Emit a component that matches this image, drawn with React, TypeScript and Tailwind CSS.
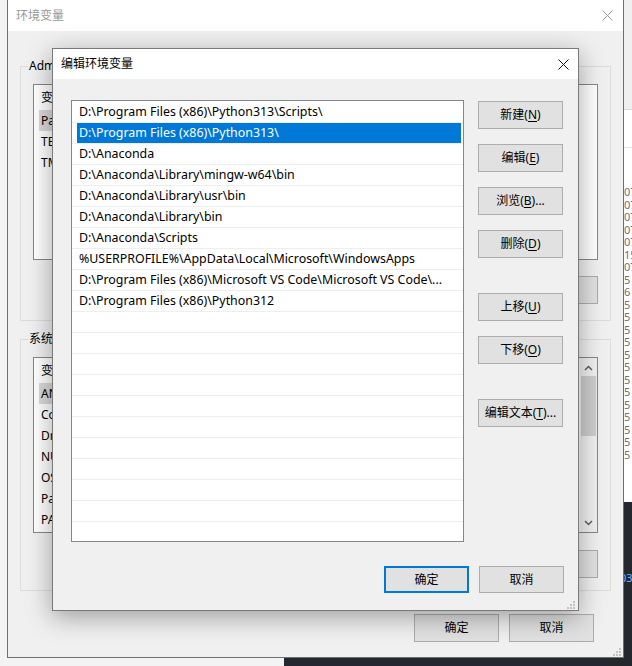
import type { ReactNode } from "react";

const paths = [
  "D:\\Program Files (x86)\\Python313\\Scripts\\",
  "D:\\Program Files (x86)\\Python313\\",
  "D:\\Anaconda",
  "D:\\Anaconda\\Library\\mingw-w64\\bin",
  "D:\\Anaconda\\Library\\usr\\bin",
  "D:\\Anaconda\\Library\\bin",
  "D:\\Anaconda\\Scripts",
  "%USERPROFILE%\\AppData\\Local\\Microsoft\\WindowsApps",
  "D:\\Program Files (x86)\\Microsoft VS Code\\Microsoft VS Code\\...",
  "D:\\Program Files (x86)\\Python312",
];

const userVars = [
  ["Path", "D:\\Program Files (x86)\\Python313\\Scripts\\;D:\\Program Files..."],
  ["TEMP", "%USERPROFILE%\\AppData\\Local\\Temp"],
  ["TMP", "%USERPROFILE%\\AppData\\Local\\Temp"],
];

const systemVars = [
  ["ANDROID_HOME", "D:\\Android\\Sdk"],
  ["ComSpec", "C:\\Windows\\system32\\cmd.exe"],
  ["DriverData", "C:\\Windows\\System32\\Drivers\\DriverData"],
  ["NUMBER_OF_PROCESSORS", "8"],
  ["OS", "Windows_NT"],
  ["Path", "C:\\Windows\\system32;C:\\Windows;C:\\Windows\\System32\\Wbem;..."],
  ["PATHEXT", ".COM;.EXE;.BAT;.CMD;.VBS;.VBE;.JS;.JSE;.WSF;.WSH;.MSC"],
];

const logNumbers = ["07", "07", "07", "07", "07", "15", "07", "5", "6", "5", "5", "5", "5", "5", "5", "5", "5", "5", "5", "5", "5", "5"];

function Button({ children, className = "" }: { children: ReactNode; className?: string }) {
  return (
    <div
      className={`flex w-[85px] shrink-0 items-center justify-center bg-[#e1e1e1] text-[12px] leading-none text-black ${className}`}
    >
      {children}
    </div>
  );
}

function CloseX({ color }: { color: string }) {
  return (
    <svg width="11" height="11" viewBox="0 0 11 11" fill="none" stroke={color} strokeWidth="1">
      <path d="M0.5 0.5L10.5 10.5M10.5 0.5L0.5 10.5" />
    </svg>
  );
}

function Grip() {
  return (
    <svg width="8" height="8" viewBox="0 0 8 8" fill="#c2c2c2">
      <rect x="6" y="0" width="2" height="2" />
      <rect x="3" y="3" width="2" height="2" />
      <rect x="6" y="3" width="2" height="2" />
      <rect x="0" y="6" width="2" height="2" />
      <rect x="3" y="6" width="2" height="2" />
      <rect x="6" y="6" width="2" height="2" />
    </svg>
  );
}

function VarList({ rows, scroll }: { rows: string[][]; scroll?: boolean }) {
  return (
    <div className="mx-[12px] mt-[17px] flex h-[176px] overflow-hidden border border-[#828790] bg-white">
      <div className="min-w-0 flex-1">
        <div className="flex h-[25px] items-center pl-[7px] text-[12px]">
          <div className="w-[140px]">变量</div>
          <div>值</div>
        </div>
        {rows.map(([k, v], i) => (
          <div key={k} className="ml-[5px] flex h-[21px] items-center text-[12px] whitespace-nowrap">
            <div className={`flex h-full w-[142px] shrink-0 items-center pl-[2px] ${i === 0 ? "bg-[#d9d9d9]" : ""}`}>
              {k}
            </div>
            <div className="truncate pl-[4px]">{v}</div>
          </div>
        ))}
      </div>
      {scroll && (
        <div className="flex w-[17px] flex-col items-center bg-[#f0f0f0]">
          <svg className="mt-[7px]" width="9" height="6" viewBox="0 0 9 6" fill="none" stroke="#606060" strokeWidth="1.5">
            <path d="M1 5L4.5 1.5L8 5" />
          </svg>
          <div className="mt-[5px] h-[60px] w-[15px] bg-[#cdcdcd]" />
          <div className="flex-1" />
          <svg className="mb-[6px]" width="9" height="6" viewBox="0 0 9 6" fill="none" stroke="#606060" strokeWidth="1.5">
            <path d="M1 1L4.5 4.5L8 1" />
          </svg>
        </div>
      )}
    </div>
  );
}

function GroupBox({ label, children, className = "" }: { label: string; children: ReactNode; className?: string }) {
  return (
    <div className={`relative flex flex-col border border-[#dcdcdc] ${className}`}>
      <div className="absolute -top-[9px] left-[7px] bg-[#f0f0f0] px-[1px] text-[12px] leading-[16px]">{label}</div>
      {children}
    </div>
  );
}

function BackWindow() {
  return (
    <div className="absolute top-0 left-[7px] flex h-[658px] w-[617px] flex-col border-x border-b border-[#707070] bg-[#f0f0f0]">
      <div className="flex h-[31px] items-center justify-between bg-white pr-[10px] pl-[8px]">
        <span className="text-[12px] text-[#999999]">环境变量</span>
        <CloseX color="#9a9a9a" />
      </div>
      <div className="flex flex-1 flex-col px-[12px]">
        <GroupBox label="Administrator 的用户变量(U)" className="mt-[35px] h-[255px]">
          <VarList rows={userVars} />
          <div className="mt-[16px] flex justify-end gap-[10px] pr-[12px]">
            <Button className="h-[28px] border border-[#adadad]">新建(N)...</Button>
            <Button className="h-[28px] border border-[#adadad]">编辑(E)...</Button>
            <Button className="h-[28px] border border-[#adadad]">删除(D)</Button>
          </div>
        </GroupBox>
        <GroupBox label="系统变量(S)" className="mt-[18px] h-[252px]">
          <VarList rows={systemVars} scroll />
          <div className="mt-[17px] flex justify-end gap-[10px] pr-[12px]">
            <Button className="h-[28px] border border-[#adadad]">新建(W)...</Button>
            <Button className="h-[28px] border border-[#adadad]">编辑(I)...</Button>
            <Button className="h-[28px] border border-[#adadad]">删除(L)</Button>
          </div>
        </GroupBox>
        <div className="mt-[23px] flex justify-end gap-[10px] pr-[17px]">
          <Button className="h-[28px] border border-[#adadad]">确定</Button>
          <Button className="h-[28px] border border-[#adadad]">取消</Button>
        </div>
      </div>
      <div className="absolute right-[2px] bottom-[1px]">
        <Grip />
      </div>
    </div>
  );
}

function EditDialog() {
  const empty = Array.from({ length: 21 - paths.length });
  return (
    <div className="absolute top-[48px] left-[52px] flex h-[563px] w-[527px] flex-col border border-[#7a7a7a] bg-[#f0f0f0] shadow-[0_6px_24px_rgba(0,0,0,0.35)]">
      <div className="flex h-[30px] items-center justify-between bg-white pr-[9px] pl-[8px]">
        <span className="text-[12px] text-black">编辑环境变量</span>
        <CloseX color="#111111" />
      </div>
      <div className="flex flex-1 flex-col pt-[21px] pr-[14px] pl-[18px]">
        <div className="flex gap-[14px]">
          <div className="h-[442px] w-[393px] overflow-hidden border border-[#828790] bg-white pt-[1px]">
            {paths.map((p, i) => (
              <div key={p} className="flex h-[21px] border-b border-[#eeeeee] text-[12.4px] whitespace-nowrap">
                <div
                  className={`mr-[2px] ml-[5px] flex flex-1 items-center pl-[2px] ${i === 1 ? "bg-[#0078d7] text-white" : "text-black"}`}
                >
                  {p}
                </div>
              </div>
            ))}
            {empty.map((_, i) => (
              <div key={i} className="h-[21px] border-b border-[#eeeeee]" />
            ))}
          </div>
          <div className="flex flex-col pt-[1px]">
            <Button className="h-[28px] border border-[#adadad]">
              新建(<span className="underline underline-offset-2">N</span>)
            </Button>
            <Button className="mt-[15px] h-[28px] border border-[#adadad]">
              编辑(<span className="underline underline-offset-2">E</span>)
            </Button>
            <Button className="mt-[15px] h-[28px] border border-[#adadad]">
              浏览(<span className="underline underline-offset-2">B</span>)...
            </Button>
            <Button className="mt-[15px] h-[28px] border border-[#adadad]">
              删除(<span className="underline underline-offset-2">D</span>)
            </Button>
            <Button className="mt-[35px] h-[28px] border border-[#adadad]">
              上移(<span className="underline underline-offset-2">U</span>)
            </Button>
            <Button className="mt-[15px] h-[28px] border border-[#adadad]">
              下移(<span className="underline underline-offset-2">O</span>)
            </Button>
            <Button className="mt-[35px] h-[28px] border border-[#adadad]">
              编辑文本(<span className="underline underline-offset-2">T</span>)...
            </Button>
          </div>
        </div>
        <div className="mt-[24px] flex justify-end gap-[10px]">
          <Button className="h-[27px] border-2 border-[#0078d7]">确定</Button>
          <Button className="h-[27px] border border-[#adadad]">取消</Button>
        </div>
      </div>
      <div className="absolute right-[3px] bottom-[1px]">
        <Grip />
      </div>
    </div>
  );
}

export default function App() {
  return (
    <div className="relative h-[666px] w-[632px] overflow-hidden bg-[#f3f3f3] font-['Noto_Sans','Noto_Sans_CJK_SC',sans-serif] text-black">
      {/* window peeking out on the right */}
      <div className="absolute top-0 left-[600px] flex h-[502px] w-[32px] flex-col bg-white">
        <div className="h-[110px] border-b border-[#d9d9d9] bg-[#f0f0f0]" />
        <div className="h-[38px] border-b border-[#e5e5e5]" />
        <div className="flex flex-col pt-[38px] pl-[24px] text-[11px] leading-[12.5px] text-[#707070]">
          {logNumbers.map((n, i) => (
            <span key={i}>{n}</span>
          ))}
        </div>
      </div>
      {/* dark editor behind */}
      <div className="absolute top-[502px] right-0 bottom-0 left-[284px] bg-[#24282e]">
        <div className="pt-[68px] pl-[336px] text-[11px] text-[#6cb6ff]">03</div>
      </div>
      <BackWindow />
      <EditDialog />
    </div>
  );
}
